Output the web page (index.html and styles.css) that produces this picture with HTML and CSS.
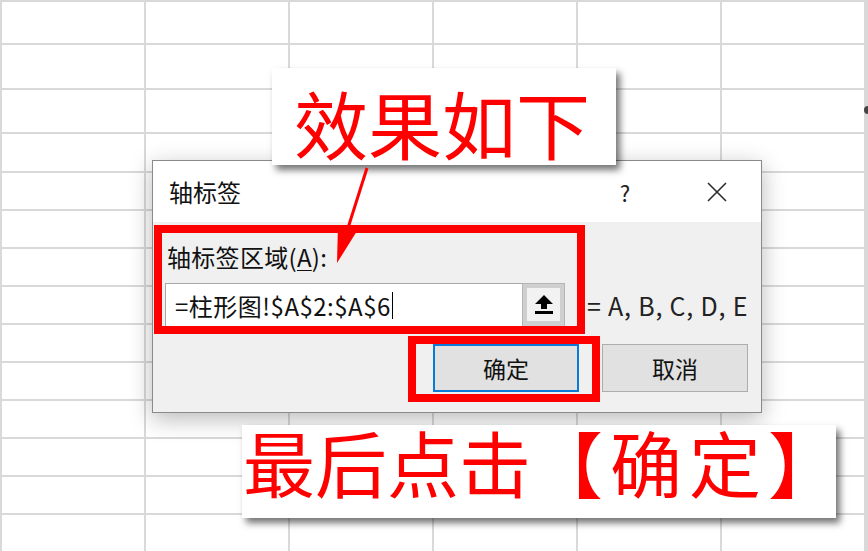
FILE: index.html
```html
<!DOCTYPE html>
<html lang="zh-CN">
<head>
<meta charset="utf-8">
<title>轴标签</title>
<link rel="stylesheet" href="styles.css">
</head>
<body>
<div class="sheet">
  <div class="cell"></div><div class="cell"></div><div class="cell"></div><div class="cell"></div><div class="cell"></div><div class="cell"></div><div class="cell"></div>
  <div class="cell"></div><div class="cell"></div><div class="cell"></div><div class="cell"></div><div class="cell"></div><div class="cell"></div><div class="cell"></div>
  <div class="cell"></div><div class="cell"></div><div class="cell"></div><div class="cell"></div><div class="cell"></div><div class="cell"></div><div class="cell"></div>
  <div class="cell"></div><div class="cell"></div><div class="cell"></div><div class="cell"></div><div class="cell"></div><div class="cell"></div><div class="cell"></div>
  <div class="cell"></div><div class="cell"></div><div class="cell"></div><div class="cell"></div><div class="cell"></div><div class="cell"></div><div class="cell"></div>
  <div class="cell"></div><div class="cell"></div><div class="cell"></div><div class="cell"></div><div class="cell"></div><div class="cell"></div><div class="cell"></div>
  <div class="cell"></div><div class="cell"></div><div class="cell"></div><div class="cell"></div><div class="cell"></div><div class="cell"></div><div class="cell"></div>
  <div class="cell"></div><div class="cell"></div><div class="cell"></div><div class="cell"></div><div class="cell"></div><div class="cell"></div><div class="cell"></div>
  <div class="cell"></div><div class="cell"></div><div class="cell"></div><div class="cell"></div><div class="cell"></div><div class="cell"></div><div class="cell"></div>
  <div class="cell"></div><div class="cell"></div><div class="cell"></div><div class="cell"></div><div class="cell"></div><div class="cell"></div><div class="cell"></div>
  <div class="cell"></div><div class="cell"></div><div class="cell"></div><div class="cell"></div><div class="cell"></div><div class="cell"></div><div class="cell"></div>
  <div class="cell"></div><div class="cell"></div><div class="cell"></div><div class="cell"></div><div class="cell"></div><div class="cell"></div><div class="cell"></div>
  <div class="cell"></div><div class="cell"></div><div class="cell"></div><div class="cell"></div><div class="cell"></div><div class="cell"></div><div class="cell"></div>
  <div class="cell"></div><div class="cell"></div><div class="cell"></div><div class="cell"></div><div class="cell"></div><div class="cell"></div><div class="cell"></div>
</div>

<span class="cursor-dot"></span>

<div class="dialog">
  <div class="titlebar">
    <span class="title">轴标签</span>
    <span class="help">?</span>
    <span class="close">
      <svg width="22" height="22" viewBox="0 0 22 22"><path d="M2 2 L20 20 M20 2 L2 20" stroke="#2b2b2b" stroke-width="1.6" fill="none"/></svg>
    </span>
  </div>
  <div class="body">
    <div class="label">轴标签区域(<u>A</u>):</div>
    <div class="input-row">
      <div class="input"><span class="value">=柱形图!$A$2:$A$6</span><span class="caret"></span></div>
      <div class="collapse">
        <span class="collapse-inner">
          <svg width="20" height="21" viewBox="0 0 20 21"><path d="M10 1 L19 10 H13 V15 H7 V10 H1 Z" fill="#000"/><rect x="1" y="17" width="18" height="3" fill="#000"/></svg>
        </span>
      </div>
      <span class="preview">= A, B, C, D, E</span>
    </div>
    <div class="buttons">
      <button class="btn btn-default">确定</button>
      <button class="btn">取消</button>
    </div>
  </div>
</div>

<div class="highlight hl-range"></div>
<div class="highlight hl-ok"></div>

<div class="note note-top">效果如下</div>
<div class="note note-bottom">最后点击<span class="bracketed">【确定】</span></div>

<svg class="arrow" width="50" height="110" viewBox="0 0 50 110">
  <line x1="42" y1="8" x2="23" y2="68" stroke="#ff0000" stroke-width="3"/>
  <polygon points="13,65 32,71 12,103" fill="#ff0000"/>
</svg>
</body>
</html>
```
FILE: styles.css
```css
html, body {
  margin: 0;
  padding: 0;
}

body {
  width: 868px;
  height: 551px;
  overflow: hidden;
  position: relative;
  background: #ffffff;
  font-family: "Noto Sans CJK SC", "Noto Sans", sans-serif;
  color: #111;
}

.sheet {
  display: grid;
  grid-template-columns: 144px repeat(5, 144px) 1fr;
  grid-template-rows: 43px 45px 44px 39px repeat(10, 38px);
  border-top: 2px solid #d9d9d9;
  border-left: 2px solid #d9d9d9;
}

.cell {
  box-sizing: border-box;
  border-right: 2px solid #d9d9d9;
  border-bottom: 2px solid #d9d9d9;
}

.cursor-dot {
  position: absolute;
  left: 864px;
  top: 106px;
  width: 8px;
  height: 8px;
  border-radius: 50%;
  background: #444;
}

/* dialog window */
.dialog {
  position: absolute;
  left: 152px;
  top: 160px;
  width: 610px;
  height: 253px;
  box-sizing: border-box;
  border: 1px solid #8a8a8a;
  background: #f0f0f0;
  box-shadow: 0 6px 22px rgba(0, 0, 0, 0.28);
  display: flex;
  flex-direction: column;
}

.titlebar {
  height: 61px;
  flex: none;
  background: #ffffff;
  display: flex;
  align-items: center;
  padding-left: 16px;
}

.title {
  font-size: 24px;
}

.help {
  margin-left: auto;
  width: 40px;
  text-align: center;
  font-size: 22px;
  color: #222;
}

.close {
  width: 46px;
  margin-left: 49px;
  margin-right: 21px;
  display: flex;
  justify-content: center;
}

.body {
  flex: 1;
  padding: 20px 13px 0 12px;
  display: flex;
  flex-direction: column;
}

.label {
  font-size: 24px;
  line-height: 30px;
  height: 30px;
  padding-left: 2px;
  letter-spacing: 0.3px;
}

.label u {
  text-decoration-thickness: 1px;
  text-underline-offset: 3px;
}

.input-row {
  margin-top: 11px;
  height: 44px;
  display: flex;
  align-items: center;
}

.input {
  flex: none;
  width: 357px;
  height: 44px;
  box-sizing: border-box;
  background: #ffffff;
  border: 1px solid #a8a8a8;
  border-right: none;
  display: flex;
  align-items: center;
  padding-left: 9px;
  font-size: 24px;
  letter-spacing: 0.5px;
  white-space: nowrap;
}

.caret {
  width: 1px;
  height: 27px;
  background: #000;
  margin-left: 1px;
}

.collapse {
  flex: none;
  width: 43px;
  height: 44px;
  box-sizing: border-box;
  background: #cfcfcf;
  border: 1px solid #b5b5b5;
  padding: 4px 4px 5px 4px;
  display: flex;
}

.collapse-inner {
  flex: 1;
  background: #f2f2f2;
  display: flex;
  align-items: center;
  justify-content: center;
}

.preview {
  flex: none;
  margin-left: 22px;
  font-size: 25px;
  letter-spacing: 0.8px;
  color: #222;
  white-space: nowrap;
}

.buttons {
  margin-top: 17px;
  display: flex;
  justify-content: flex-end;
  gap: 23px;
}

.btn {
  width: 146px;
  height: 48px;
  box-sizing: border-box;
  background: #e1e1e1;
  border: 1px solid #adadad;
  font-family: "Noto Sans CJK SC", "Noto Sans", sans-serif;
  font-size: 23px;
  color: #111;
  padding: 0;
}

.btn-default {
  border: 2px solid #0a7ad9;
}

/* red annotation frames */
.highlight {
  position: absolute;
  box-sizing: border-box;
  border: 8px solid #ff0000;
}

.hl-range {
  left: 154px;
  top: 225px;
  width: 431px;
  height: 109px;
}

.hl-ok {
  left: 408px;
  top: 336px;
  width: 192px;
  height: 66px;
}

/* callout notes */
.note {
  position: absolute;
  box-sizing: border-box;
  background: #ffffff;
  color: #ff0000;
  box-shadow: 4px 5px 7px rgba(0, 0, 0, 0.55);
  line-height: 1;
  white-space: nowrap;
}

.note-top {
  left: 272px;
  top: 68px;
  width: 344px;
  height: 97px;
  padding: 17px 0 0 22px;
  font-size: 74px;
}

.note-bottom {
  left: 242px;
  top: 425px;
  width: 594px;
  height: 93px;
  padding: 0 0 0 1px;
  font-size: 72px;
}

.bracketed {
  letter-spacing: 7px;
}

.arrow {
  position: absolute;
  left: 325px;
  top: 160px;
}
```
